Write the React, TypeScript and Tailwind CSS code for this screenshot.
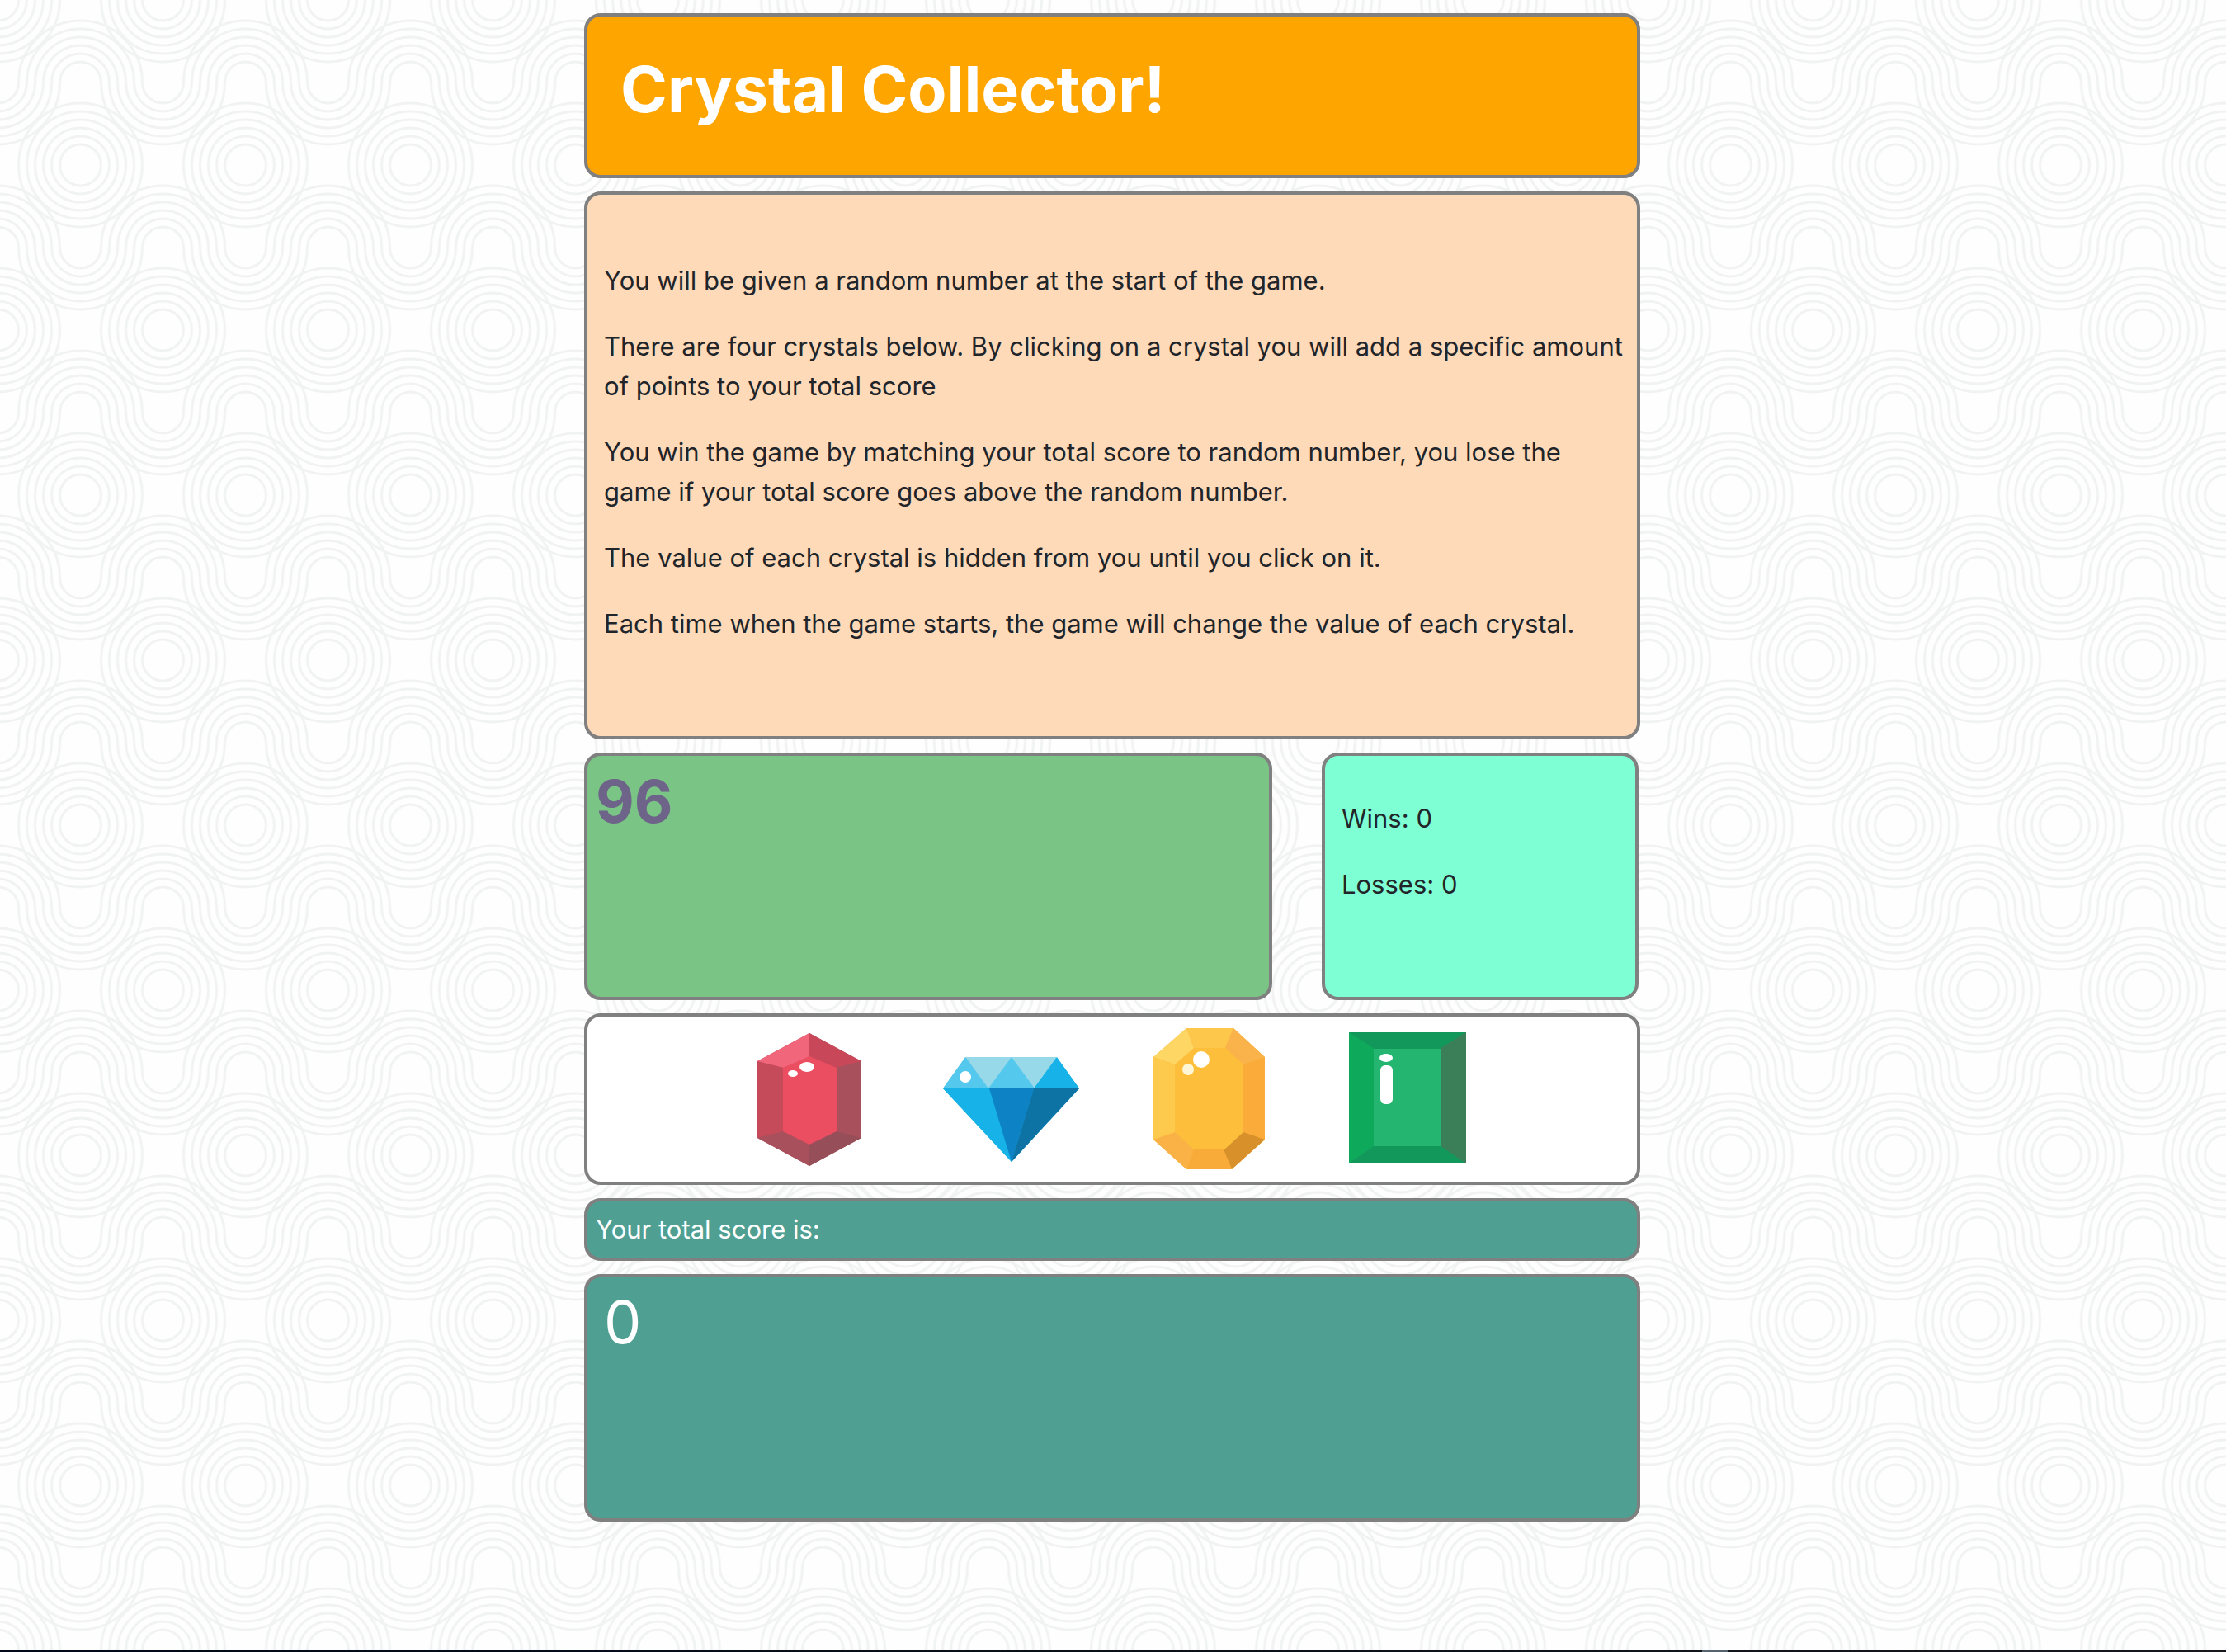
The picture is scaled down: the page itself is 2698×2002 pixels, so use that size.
import React from 'react';

const RADII = [25, 35, 45, 55, 65, 75];

function Rings({ x, y }: { x: number; y: number }) {
  return <>{RADII.map((r) => <circle key={r} cx={x} cy={y} r={r} />)}</>;
}

function Arch({ x, y, down = false }: { x: number; y: number; down?: boolean }) {
  return (
    <>
      {RADII.map((r) => (
        <path key={r} d={`M${x - r} ${y}A${r} ${r} 0 0 ${down ? 0 : 1} ${x + r} ${y}`} />
      ))}
    </>
  );
}

function Backdrop() {
  return (
    <svg className="absolute inset-0 -z-10 h-full w-full" aria-hidden="true">
      <defs>
        <pattern id="waves" x="-2.5" y="0" width="200" height="400" patternUnits="userSpaceOnUse">
          <g fill="none" stroke="#f1f2f2" strokeWidth="3">
            <Rings x={0} y={0} />
            <Rings x={200} y={0} />
            <Rings x={100} y={200} />
            <Rings x={0} y={400} />
            <Rings x={200} y={400} />
            <Arch x={100} y={100} />
            <Arch x={0} y={100} down />
            <Arch x={200} y={100} down />
            <Arch x={0} y={300} />
            <Arch x={200} y={300} />
            <Arch x={100} y={300} down />
          </g>
        </pattern>
      </defs>
      <rect width="100%" height="100%" fill="#fefefe" />
      <rect width="100%" height="100%" fill="url(#waves)" />
    </svg>
  );
}

function Ruby() {
  return (
    <svg width="200" height="200" viewBox="6 0 200 200" aria-hidden="true">
      <path fill="#b84e5c" d="M99 20 162 54V147L99 181 36 147V54Z" />
      <path fill="#c54b5b" d="M36 54 68 62V139L36 147Z" />
      <path fill="#f2667c" d="M99 20V49L68 62 36 54Z" />
      <path fill="#c8485a" d="M99 20 162 54 131 62 99 49Z" />
      <path fill="#a9505d" d="M162 54V147L131 139V62Z" />
      <path fill="#a9505d" d="M36 147 68 139 99 154V181Z" />
      <path fill="#964e59" d="M162 147 131 139 99 154V181Z" />
      <path fill="#eb4d61" d="M99 48 132 62V139L99 155 67 139V62Z" />
      <ellipse cx="96" cy="61" rx="9" ry="6" fill="#fff" />
      <ellipse cx="79" cy="69" rx="6" ry="4" fill="#fff" />
    </svg>
  );
}

function Diamond() {
  return (
    <svg width="200" height="200" viewBox="5 0 200 200" aria-hidden="true">
      <path fill="#17b2e7" d="M47 50H158L185 87 103 176 20 87Z" />
      <path fill="#97d8e9" d="M47 49H158L131 87H74Z" />
      <path fill="#55c8ee" d="M47 49 75 87H20ZM103 49 131 87H75Z" />
      <path fill="#17b2e7" d="M158 49 185 87H130ZM20 87H76L103 176Z" />
      <path fill="#0d82c4" d="M76 87H130L103 176Z" />
      <path fill="#0d73a5" d="M130 87H185L103 176Z" />
      <circle cx="47" cy="73" r="7" fill="#fff" />
    </svg>
  );
}

function Topaz() {
  return (
    <svg width="200" height="200" viewBox="-17 0 200 200" aria-hidden="true">
      <path fill="#fbb640" d="M53 14H110L148 49V149L108 185H53L13 149V49Z" />
      <path fill="#fdbf3b" d="M61 37H101L123 57V141L99 162H61L38 141V57Z" />
      <path fill="#fdd664" d="M53 14 62 38 39 58 13 49Z" />
      <path fill="#fdc74b" d="M53 14H110L100 38H62Z" />
      <path fill="#fab24a" d="M110 14 148 49 122 58 100 38Z" />
      <path fill="#faab39" d="M148 49V149L122 140V58Z" />
      <path fill="#d8902b" d="M148 149 108 185 98 162 122 140Z" />
      <path fill="#f9ab3a" d="M108 185H53L62 161H98Z" />
      <path fill="#fab246" d="M53 185 13 149 39 140 62 161Z" />
      <path fill="#fdca4d" d="M13 49 39 58V140L13 149Z" />
      <circle cx="71" cy="52" r="10" fill="#fff" />
      <circle cx="55" cy="64" r="7" fill="#fff6d6" />
    </svg>
  );
}

function Emerald() {
  return (
    <svg width="200" height="200" viewBox="-1 0 200 200" aria-hidden="true">
      <path fill="#13985b" d="M26 19H168V178H26Z" />
      <path fill="#0fa95b" d="M26 19 57 39V156L26 178Z" />
      <path fill="#3b7f58" d="M168 19V178L136 156V39Z" />
      <path fill="#24b570" d="M56 39H137V157H56Z" />
      <ellipse cx="71" cy="50" rx="8" ry="5" fill="#fff" />
      <rect x="64" y="59" width="15" height="47" rx="6" fill="#fff" />
    </svg>
  );
}

const CRYSTALS = [
  { name: 'Ruby', Art: Ruby },
  { name: 'Diamond', Art: Diamond },
  { name: 'Topaz', Art: Topaz },
  { name: 'Emerald', Art: Emerald },
];

const RULES = [
  'You will be given a random number at the start of the game.',
  'There are four crystals below. By clicking on a crystal you will add a specific amount of points to your total score',
  'You win the game by matching your total score to random number, you lose the game if your total score goes above the random number.',
  'The value of each crystal is hidden from you until you click on it.',
  'Each time when the game starts, the game will change the value of each crystal.',
];

export default function App() {
  return (
    <div className="relative isolate flex min-h-screen flex-col justify-between overflow-hidden font-[Inter,sans-serif] text-[31px] leading-[48px] text-[#212529]">
      <Backdrop />
      <div className="pt-4 pr-0.5">
        <main className="mx-auto flex w-full max-w-[1280px] flex-col gap-4">
          <header className="rounded-[20px] border-4 border-[#808080] bg-[#ffa500] px-10 pt-10 pb-14">
            <h1 className="text-[77px] leading-[96px] font-bold text-white">Crystal Collector!</h1>
          </header>
          <section className="flex flex-col gap-8 rounded-[20px] border-4 border-[#808080] bg-[#ffdab9] pt-20 pr-2 pb-28 pl-5">
            {RULES.map((rule) => (
              <p key={rule}>{rule}</p>
            ))}
          </section>
          <div className="flex gap-[60px] pr-0.5">
            <section className="h-[300px] grow rounded-[20px] border-4 border-[#808080] bg-[#7ac586] px-2.5 pt-3">
              <p className="text-[72px] leading-[86px] font-bold text-[#6e6388]">96</p>
            </section>
            <section className="flex h-[300px] w-[384px] flex-col gap-8 rounded-[20px] border-4 border-[#808080] bg-[#7fffd4] px-5 pt-[52px]">
              <p>Wins: 0</p>
              <p>Losses: 0</p>
            </section>
          </div>
          <section className="flex justify-center gap-10 rounded-[20px] border-4 border-[#808080] bg-white">
            {CRYSTALS.map(({ name, Art }) => (
              <button key={name} type="button" aria-label={name}>
                <Art />
              </button>
            ))}
          </section>
          <section className="rounded-[20px] border-4 border-[#808080] bg-[#509f93] px-2.5 py-2.5 text-white">
            <p>Your total score is:</p>
          </section>
          <section className="h-[300px] rounded-[20px] border-4 border-[#808080] bg-[#509f93] px-5 text-[72px] leading-[108px] text-white">
            <p>0</p>
          </section>
        </main>
      </div>
      <div className="flex justify-end bg-linear-to-r from-[#000a18] to-[#17171c] pr-[603px]">
        <div className="h-0.5 w-8 bg-[#56646f]" />
      </div>
    </div>
  );
}
